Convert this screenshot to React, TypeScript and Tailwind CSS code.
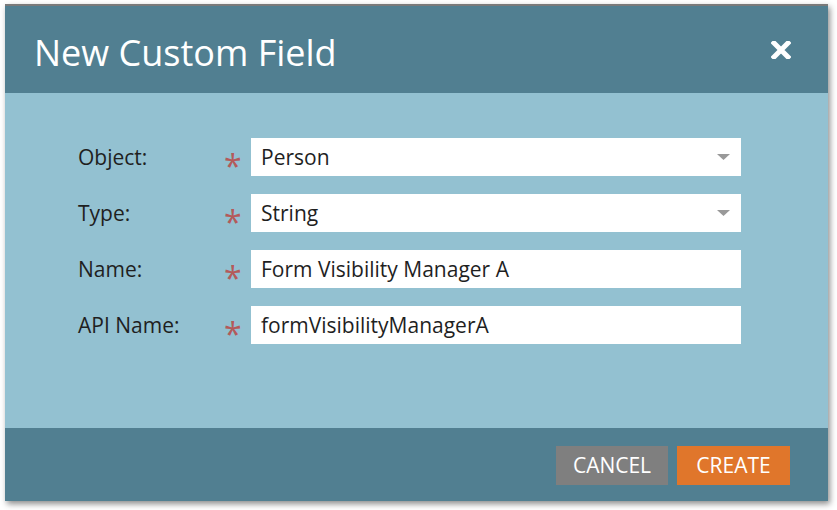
// New Custom Field dialog
const rows = [
  { label: 'Object:', value: 'Person', select: true },
  { label: 'Type:', value: 'String', select: true },
  { label: 'Name:', value: 'Form Visibility Manager A', select: false },
  { label: 'API Name:', value: 'formVisibilityManagerA', select: false },
]

function CloseIcon() {
  return (
    <svg width="20" height="18" viewBox="0 0 20 18">
      <path d="M3 2 L17 16 M17 2 L3 16" stroke="white" strokeWidth="5" strokeLinecap="square" />
    </svg>
  )
}

export default function App() {
  return (
    <div className="w-[837px] h-[510px] bg-white pt-[4px] pl-[5px]" style={{ fontFamily: '"Open Sans", sans-serif' }}>
      <div className="w-[823px] shadow-[2px_3px_6px_rgba(0,0,0,0.45)] border-t-2 border-[#7a7a7a]">
        {/* Header */}
        <div className="h-[87px] bg-[#517f91] flex items-center justify-between pl-[29px] pr-[37px]">
          <h1 className="text-white text-[36px] leading-none pt-[7px]">New Custom Field</h1>
          <CloseIcon />
        </div>

        {/* Body */}
        <div className="h-[335px] bg-[#93c1d1] pt-[45px] pl-[73px] flex flex-col gap-[18px]">
          {rows.map((r) => (
            <div key={r.label} className="flex items-center h-[38px]">
              <span className="w-[146px] text-[21px] text-[#1f1f1f] pt-[2px]">{r.label}</span>
              <span className="w-[27px] text-[#b45a5a] text-[32px] leading-none pt-[17px]">*</span>
              <div className="w-[490px] h-[38px] bg-white flex items-center justify-between pl-[10px] pr-[11px]">
                <span className="text-[21px] text-[#1f1f1f] pt-[2px]">{r.value}</span>
                {r.select && (
                  <svg width="13" height="6" viewBox="0 0 13 6">
                    <path d="M0 0 H13 L6.5 6 Z" fill="#999" />
                  </svg>
                )}
              </div>
            </div>
          ))}
        </div>

        {/* Footer */}
        <div className="h-[73px] bg-[#517f91] flex justify-end items-start pt-[18px] pr-[38px] gap-[9px]">
          <button className="w-[112px] h-[39px] bg-[#7f7f7f] text-white text-[21px]">CANCEL</button>
          <button className="w-[113px] h-[39px] bg-[#e0762b] text-white text-[21px]">CREATE</button>
        </div>
      </div>
    </div>
  )
}
